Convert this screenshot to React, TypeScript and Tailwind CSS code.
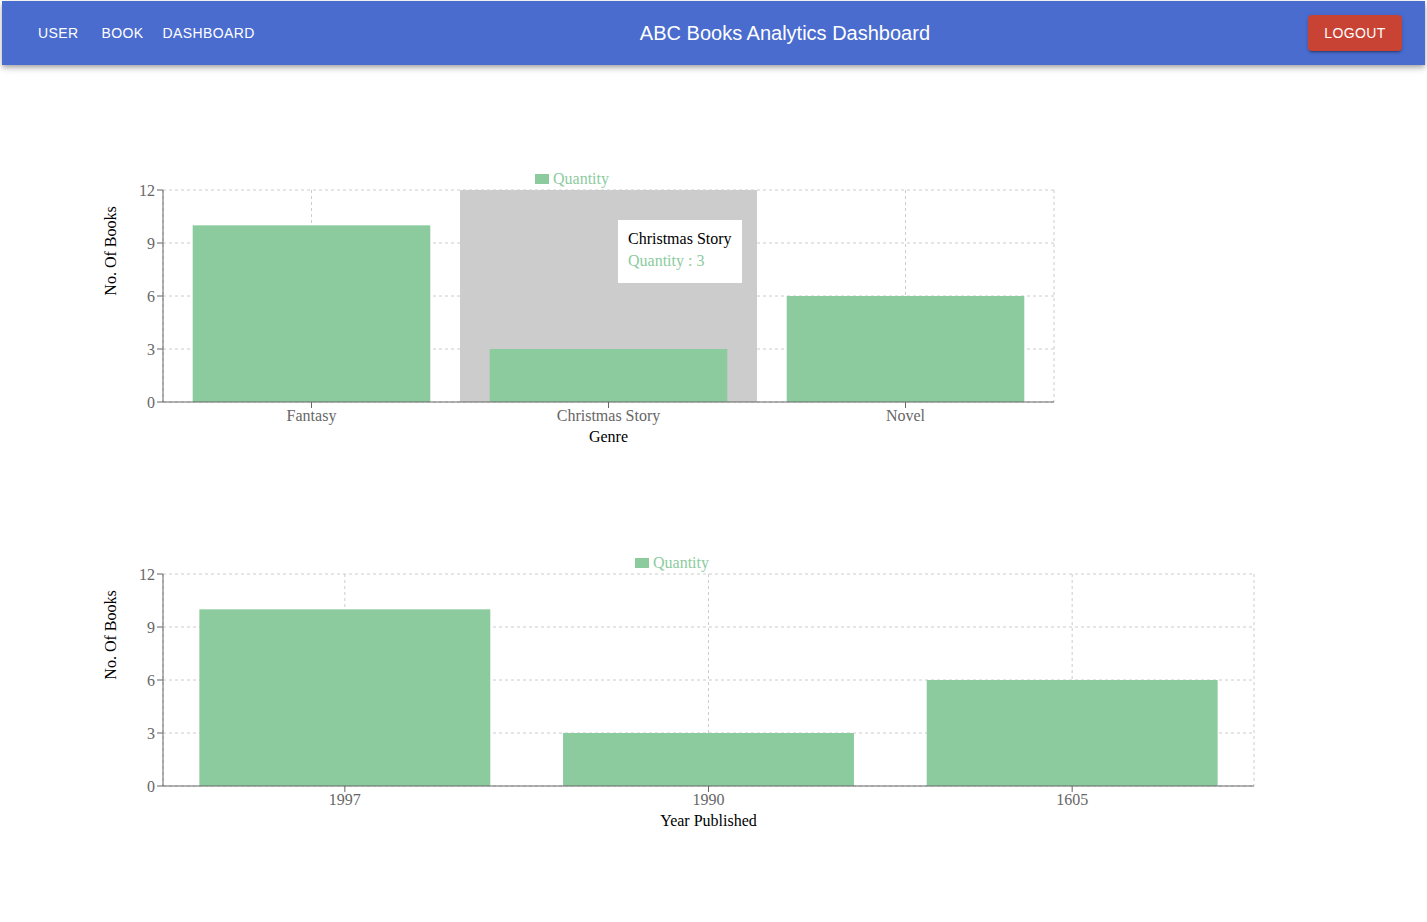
import React from "react";

const GREEN = "#8bcb9e";
const serif = { fontFamily: '"Liberation Serif", "Times New Roman", serif' };

type Datum = { label: string; value: number };

const genreData: Datum[] = [
  { label: "Fantasy", value: 10 },
  { label: "Christmas Story", value: 3 },
  { label: "Novel", value: 6 },
];

const yearData: Datum[] = [
  { label: "1997", value: 10 },
  { label: "1990", value: 3 },
  { label: "1605", value: 6 },
];

const navLinks = ["USER", "BOOK", "DASHBOARD"];

// plot area in svg coords
const LEFT = 163;
const TOP = 30;
const BOTTOM = 242;
const MAX = 12;
const ticks = [0, 3, 6, 9, 12];

const yOf = (v: number) => BOTTOM - ((BOTTOM - TOP) * v) / MAX;

type ChartProps = {
  data: Datum[];
  right: number;
  xLabel: string;
  legendX: number;
  activeIndex?: number;
};

const BarChart = ({ data, right, xLabel, legendX, activeIndex }: ChartProps) => {
  const band = (right - LEFT) / data.length;
  const centers = data.map((_, i) => LEFT + band * i + band / 2);

  return (
    <svg width={1427} height={300} style={serif} className="block">
      {/* legend */}
      <rect x={legendX} y={14} width={14} height={10} fill={GREEN} />
      <text x={legendX + 18} y={24} fontSize={16} fill={GREEN}>
        Quantity
      </text>

      {/* grid */}
      <g stroke="#ccc" strokeDasharray="3 3" fill="none">
        {ticks.map((t) => (
          <line key={t} x1={LEFT} x2={right} y1={yOf(t)} y2={yOf(t)} />
        ))}
        {[LEFT, ...centers, right].map((x, i) => (
          <line key={i} x1={x} x2={x} y1={TOP} y2={BOTTOM} />
        ))}
      </g>

      {/* hover cursor */}
      {activeIndex !== undefined && (
        <rect
          x={LEFT + band * activeIndex}
          y={TOP}
          width={band}
          height={BOTTOM - TOP}
          fill="#ccc"
        />
      )}

      {/* bars */}
      {data.map((d, i) => (
        <rect
          key={d.label}
          x={LEFT + band * i + band * 0.1}
          y={yOf(d.value)}
          width={band * 0.8}
          height={BOTTOM - yOf(d.value)}
          fill={GREEN}
        />
      ))}

      {/* y axis */}
      <line x1={LEFT} x2={LEFT} y1={TOP} y2={BOTTOM} stroke="#666" />
      {ticks.map((t) => (
        <g key={t}>
          <line x1={LEFT - 6} x2={LEFT} y1={yOf(t)} y2={yOf(t)} stroke="#666" />
          <text
            x={LEFT - 8}
            y={yOf(t) + 5.5}
            textAnchor="end"
            fontSize={16}
            fill="#666"
          >
            {t}
          </text>
        </g>
      ))}
      <text
        x={116}
        y={91}
        transform="rotate(-90 116 91)"
        textAnchor="middle"
        fontSize={16}
        fill="#000"
      >
        No. Of Books
      </text>

      {/* x axis */}
      <line x1={LEFT} x2={right} y1={BOTTOM} y2={BOTTOM} stroke="#666" />
      {data.map((d, i) => (
        <g key={d.label}>
          <line
            x1={centers[i]}
            x2={centers[i]}
            y1={BOTTOM}
            y2={BOTTOM + 6}
            stroke="#666"
          />
          <text
            x={centers[i]}
            y={261}
            textAnchor="middle"
            fontSize={16}
            fill="#666"
          >
            {d.label}
          </text>
        </g>
      ))}
      <text
        x={(LEFT + right) / 2}
        y={282}
        textAnchor="middle"
        fontSize={16}
        fill="#000"
      >
        {xLabel}
      </text>

      {/* tooltip */}
      {activeIndex !== undefined && (
        <g>
          <rect x={618} y={60} width={124} height={63} fill="#fff" />
          <text x={628} y={83.5} fontSize={16} fill="#000">
            {data[activeIndex].label}
          </text>
          <text x={628} y={105.5} fontSize={16} fill={GREEN}>
            Quantity : {data[activeIndex].value}
          </text>
        </g>
      )}
    </svg>
  );
};

const App = () => {
  return (
    <div
      className="min-h-screen bg-white"
      style={{ fontFamily: '"Liberation Sans", Arial, sans-serif' }}
    >
      <div className="px-[2px] pt-[1px]">
        <header className="flex h-[64px] items-center bg-[#4a6ccf] text-white shadow-[0_2px_4px_-1px_rgba(0,0,0,0.2),0_4px_5px_0_rgba(0,0,0,0.14),0_1px_10px_0_rgba(0,0,0,0.12)]">
          <nav className="ml-[36px] flex items-center text-[14px] font-medium tracking-[0.4px]">
            <span>USER</span>
            <span className="ml-[23px]">BOOK</span>
            <span className="ml-[19px]">DASHBOARD</span>
          </nav>
          <h1 className="ml-[385px] text-[20px] font-normal">
            ABC Books Analytics Dashboard
          </h1>
          <div className="flex-1" />
          <button className="mr-[23px] h-[36px] w-[94px] rounded bg-[#c84334] text-[14px] font-medium tracking-[0.4px] text-white shadow-[0_3px_1px_-2px_rgba(0,0,0,0.2),0_2px_2px_0_rgba(0,0,0,0.14),0_1px_5px_0_rgba(0,0,0,0.12)]">
            LOGOUT
          </button>
        </header>
      </div>

      <main className="flex flex-col pt-[95px]">
        <BarChart
          data={genreData}
          right={1054}
          xLabel="Genre"
          legendX={535}
          activeIndex={1}
        />
        <div className="mt-[84px]">
          <BarChart
            data={yearData}
            right={1254}
            xLabel="Year Published"
            legendX={635}
          />
        </div>
      </main>
    </div>
  );
};

export default App;
